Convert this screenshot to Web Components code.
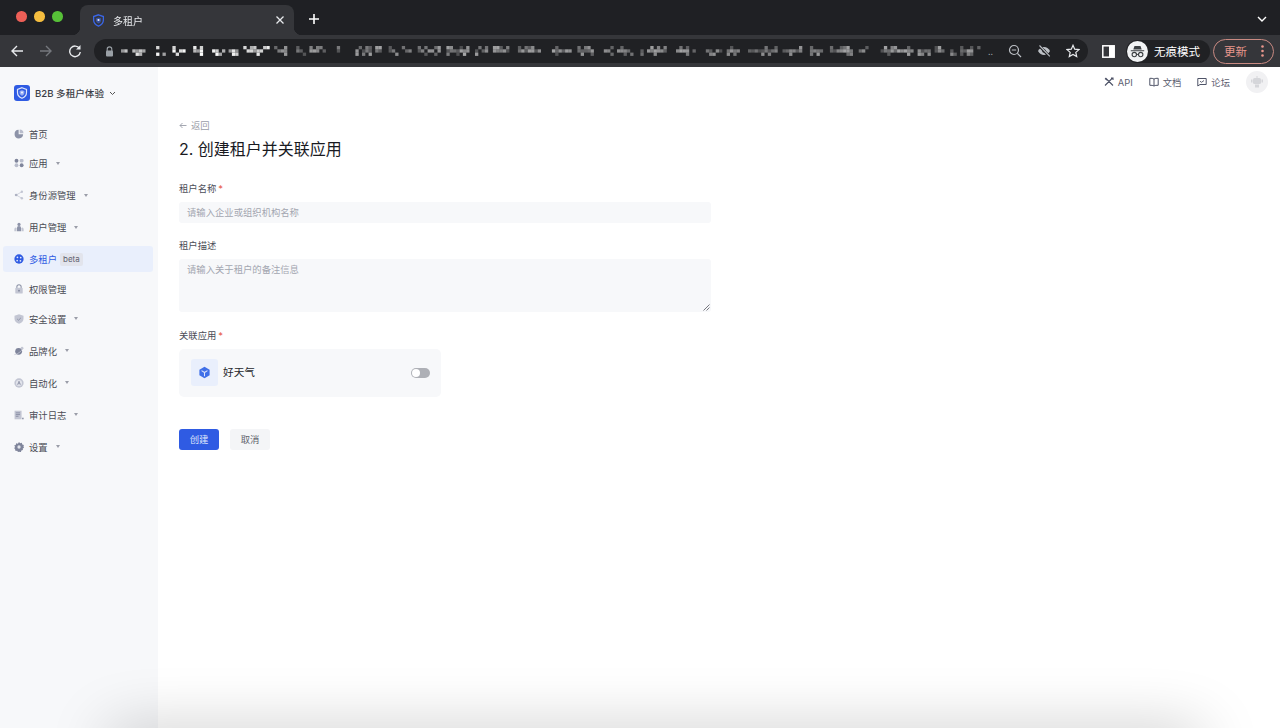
<!DOCTYPE html>
<html lang="zh">
<head>
<meta charset="utf-8">
<title>多租户</title>
<style>
  html, body { margin: 0; height: 100%; overflow: hidden; background: #fff; }
  body { font-family: Inter, "Noto Sans CJK SC", sans-serif; position: relative; }
  .app { display: flex; flex-direction: column; height: 728px; filter: blur(.3px); }
  .body-row { display: flex; flex: 1; min-height: 0; }
  /* soft shadow of the window below the bottom edge */
  .edge-clip { position: absolute; left: 0; right: 0; bottom: 0; height: 60px; overflow: hidden; pointer-events: none; }
  .edge-shadow { position: absolute; left: 105px; right: 75px; top: 60px; height: 40px; border-radius: 20px; box-shadow: 0 0 60px rgba(0,0,0,.22); }
</style>
</head>
<body>
<div class="app">
  <browser-tabs></browser-tabs>
  <browser-toolbar></browser-toolbar>
  <div class="body-row">
    <side-nav>
      <nav-item icon="pie" gap="3">首页</nav-item>
      <nav-item icon="apps" gap="3" arrow>应用</nav-item>
      <nav-item icon="share" gap="6" arrow>身份源管理</nav-item>
      <nav-item icon="users" gap="6" arrow>用户管理</nav-item>
      <nav-item icon="tenant" gap="6" active badge="beta">多租户</nav-item>
      <nav-item icon="lock" gap="4">权限管理</nav-item>
      <nav-item icon="shield" gap="3.500" arrow>安全设置</nav-item>
      <nav-item icon="planet" gap="6" arrow>品牌化</nav-item>
      <nav-item icon="auto" gap="6" arrow>自动化</nav-item>
      <nav-item icon="log" gap="6" arrow>审计日志</nav-item>
      <nav-item icon="gear" gap="6" arrow>设置</nav-item>
    </side-nav>
    <main-pane>
      <tenant-form></tenant-form>
    </main-pane>
  </div>
</div>
<div class="edge-clip"><div class="edge-shadow"></div></div>

<script>
const ICONS = {
  pie: '<path d="M6.500 1.200A6 6 0 1 0 12.800 7.500H6.500z" fill="#8d93a8"/><path d="M8 .8a5.300 5.300 0 0 1 5.200 5.200H8z" fill="#b9bdcc"/>',
  apps: '<circle cx="3.500" cy="3.800" r="2.700" fill="#7f859b"/><rect x="8" y="1.300" width="5.400" height="5" rx="2" fill="#b9bdcc"/><circle cx="3.500" cy="10.200" r="2.700" fill="#b9bdcc"/><circle cx="10.700" cy="10.200" r="2.700" fill="#7f859b"/>',
  share: '<path d="M11 2.500 3 7l8 4.500" fill="none" stroke="#c3c6d3" stroke-width="1"/><circle cx="3" cy="7" r="1.900" fill="#aeb2c2"/><circle cx="11" cy="2.500" r="1.700" fill="#c3c6d3"/><circle cx="11" cy="11.500" r="1.700" fill="#c3c6d3"/>',
  users: '<circle cx="7" cy="3.400" r="2.200" fill="#8d93a8"/><path d="M4 13V8.600a3 3 0 0 1 6 0V13z" fill="#8d93a8"/><path d="M.5 13V10a2.200 2.200 0 0 1 2.800-2V13zM13.500 13V10a2.200 2.200 0 0 0-2.800-2V13z" fill="#c3c6d3"/>',
  tenant: '<circle cx="7" cy="7" r="6.500" fill="#2f5be3"/><circle cx="4.800" cy="4.600" r="1.200" fill="#e6ecfb"/><circle cx="9.400" cy="5" r="1.200" fill="#e6ecfb"/><circle cx="4.400" cy="9.200" r="1.200" fill="#e6ecfb"/><circle cx="9" cy="9.600" r="1.200" fill="#e6ecfb"/>',
  lock: '<path d="M4 6V4a3 3 0 0 1 6 0V6" fill="none" stroke="#8d93a8" stroke-width="1.500"/><rect x="1.800" y="5.400" width="10.400" height="8" rx="1.200" fill="#c3c6d3"/><circle cx="7" cy="9.400" r="1.200" fill="#7f859b"/>',
  shield: '<path d="M7 .5 13.300 2.300V7c0 3.300-2.800 5.400-6.300 6.500C3.500 12.400.7 10.300.7 7V2.300z" fill="#c3c6d3"/><path d="M4.500 7 6.300 8.700 9.600 5.500" fill="none" stroke="#7f859b" stroke-width="1.100"/>',
  planet: '<circle cx="6.500" cy="7.500" r="4.800" fill="#7f859b"/><path d="M.5 12C3.500 12.200 11 7.500 13 2.800" fill="none" stroke="#c3c6d3" stroke-width="1.100"/><circle cx="11.300" cy="2.800" r="1.800" fill="#c3c6d3"/>',
  auto: '<circle cx="7" cy="7" r="6.500" fill="#c3c6d3"/><circle cx="7" cy="7" r="4.200" fill="#e3e5ec"/><path d="M5 9.500 7 4.500l2 5M5.800 8h2.400" fill="none" stroke="#7f859b" stroke-width="1"/>',
  log: '<rect x=".8" y="1" width="9.800" height="12" fill="#c3c6d3"/><path d="M2.500 4h6M2.500 6.400h6M2.500 8.800h3.800" stroke="#7f859b" stroke-width="1.100"/><rect x="11.300" y="10.800" width="2.200" height="2.200" fill="#8d93a8"/>',
  gear: '<path d="M7 0 8.600 1.700 10.900 1.200l.7 2.200 2.200.7-.5 2.300L14 7.900l-1.700 1.200.2 2.200-2.200.7-.7 2.200-2.300-.5L5.600 14 4.400 12.300l-2.200.2-.7-2.200-1.300-2L1.700 7 .2 4.800l2.200-.7.7-2.200 2.300.5z" fill="#7f859b"/><circle cx="7" cy="7" r="2.300" fill="#e3e5ec"/>',
  shieldLogo: '<path d="M12 1.500 21 4.700V11c0 5.500-3.800 9.400-9 11.500C6.800 20.400 3 16.500 3 11V4.700z" fill="none" stroke="currentColor" stroke-width="2.400"/><path d="M12 6.300 16.800 8V11.500c0 2.900-2 5-4.800 6.200-2.800-1.200-4.800-3.300-4.800-6.200V8z" fill="currentColor" opacity=".6"/><circle cx="12" cy="11" r="2" fill="#fff" opacity=".9"/>'
};

class BrowserTabs extends HTMLElement {
  constructor() {
    super();
    this.attachShadow({ mode: 'open' });
    this.shadowRoot.innerHTML = `
      <style>
        :host { display: flex; align-items: flex-end; height: 35px; background: #1f2024; padding-left: 16px; position: relative; font-family: "Noto Sans CJK SC", sans-serif; }
        .lights { display: flex; gap: 7.500px; align-self: flex-start; margin-top: 11px; width: 64px; }
        .lights i { width: 10.500px; height: 10.500px; border-radius: 50%; }
        .tab { width: 214px; height: 30px; background: #35363a; border-radius: 8px 8px 0 0; display: flex; align-items: center; padding: 0 9px 0 12px; box-sizing: border-box; color: #e8eaed; font-size: 10px; position: relative; }
        .tab::before, .tab::after { content: ''; position: absolute; bottom: 0; width: 8px; height: 8px; }
        .tab::before { left: -8px; background: radial-gradient(circle at 0 0, transparent 8px, #35363a 8.500px); }
        .tab::after { right: -8px; background: radial-gradient(circle at 100% 0, transparent 8px, #35363a 8.500px); }
        .fav { width: 13px; height: 13px; color: #3a66e6; margin-right: 8px; }
        .title { flex: 1; }
        .close { width: 10px; height: 10px; }
        .plus { width: 12px; height: 12px; margin: 0 0 10px 14px; }
        .down { position: absolute; right: 13px; top: 16px; width: 10px; height: 6px; }
      </style>
      <div class="lights"><i style="background:#ed5f57"></i><i style="background:#f5bd3f"></i><i style="background:#57c038"></i></div>
      <div class="tab">
        <svg class="fav" viewBox="0 0 24 24">${ICONS.shieldLogo}</svg>
        <span class="title">多租户</span>
        <svg class="close" viewBox="0 0 10 10"><path d="M1.500 1.500l7 7M8.500 1.500l-7 7" stroke="#e8eaed" stroke-width="1.300"/></svg>
      </div>
      <svg class="plus" viewBox="0 0 12 12"><path d="M6 1v10M1 6h10" stroke="#fff" stroke-width="1.600"/></svg>
      <svg class="down" viewBox="0 0 10 6"><path d="M1 1l4 4 4-4" fill="none" stroke="#fff" stroke-width="1.400"/></svg>
    `;
  }
}
customElements.define('browser-tabs', BrowserTabs);

class UrlBlur extends HTMLElement {
  constructor() {
    super();
    this.attachShadow({ mode: 'open' });
    // pixelated address: pseudo random blocks, same result every load
    let seed = 11;
    const rnd = () => (seed = (seed * 16807) % 2147483647) / 2147483647;
    const cell = 3.300;
    let x = 0, rects = '';
    while (x < 858) {
      const wordEnd = x + 6 + rnd() * 24;
      const strong = x < 126;
      for (; x < wordEnd && x < 858; x += cell) {
        for (let r = 0; r < 3; r++) {
          if (rnd() < (r === 1 ? .8 : .35)) {
            const a = (strong ? .5 : .2) + rnd() * (strong ? .5 : .4);
            rects += `<rect x="${x.toFixed(1)}" y="${(r * cell).toFixed(1)}" width="${cell}" height="${cell}" fill="#fff" opacity="${a.toFixed(2)}"/>`;
          }
        }
      }
      x += 3 + rnd() * 6;
    }
    this.shadowRoot.innerHTML = `
      <style>:host { display: block; } svg { display: block; filter: blur(.5px); }</style>
      <svg width="866" height="10" viewBox="0 0 866 10">${rects}</svg>
    `;
  }
}
customElements.define('url-blur', UrlBlur);

class BrowserToolbar extends HTMLElement {
  constructor() {
    super();
    this.attachShadow({ mode: 'open' });
    this.shadowRoot.innerHTML = `
      <style>
        :host { display: flex; align-items: center; height: 32px; background: #35363a; font-family: "Noto Sans CJK SC", sans-serif; flex: none; padding-left: 10px; box-sizing: border-box; }
        svg { display: block; flex: none; }
        .nav { display: flex; gap: 15px; width: 84px; }
        .omni { width: 994px; height: 24px; background: #202124; border-radius: 12px; display: flex; align-items: center; padding-left: 11px; box-sizing: border-box; }
        .omni url-blur { margin-left: 7px; }
        .dots { color: #9aa0a6; font-size: 9px; margin: 0 0 0 1px; width: 15.500px; }
        .tools { display: flex; gap: 15px; margin-left: 4px; }
        .panel { margin-left: 14px; }
        .incog { display: flex; align-items: center; height: 23px; width: 84px; margin-left: 11px; background: #202124; border-radius: 12px; color: #fff; font-size: 11.500px; box-sizing: border-box; }
        .incog .face { width: 21px; height: 21px; border-radius: 50%; background: #f1f3f4; margin: 0 6px 0 1px; display: flex; align-items: center; justify-content: center; }
        .update { display: flex; align-items: center; width: 61px; height: 25px; margin-left: 3px; border: 1px solid #c98a82; border-radius: 13px; box-sizing: border-box; padding: 0 9px 0 10px; color: #e8968c; font-size: 11.500px; justify-content: space-between; }
      </style>
      <div class="nav">
        <svg width="14" height="14" viewBox="0 0 14 14"><path d="M13 7H2M7 2 2 7l5 5" fill="none" stroke="#e8eaed" stroke-width="1.400"/></svg>
        <svg width="14" height="14" viewBox="0 0 14 14"><path d="M1 7h11M7 2l5 5-5 5" fill="none" stroke="#75787d" stroke-width="1.400"/></svg>
        <svg width="14" height="14" viewBox="0 0 14 14"><path d="M11.500 4.500A5.300 5.300 0 1 0 12.300 8" fill="none" stroke="#e8eaed" stroke-width="1.400"/><path d="M12.500 1v4.500H8z" fill="#e8eaed"/></svg>
      </div>
      <div class="omni">
        <svg width="9" height="11" viewBox="0 0 9 11"><path d="M2.200 5V3.200a2.300 2.300 0 0 1 4.600 0V5" fill="none" stroke="#9aa0a6" stroke-width="1.100"/><rect x="1" y="4.500" width="7" height="6" rx="1" fill="#9aa0a6"/></svg>
        <url-blur></url-blur>
        <span class="dots">..</span>
        <div class="tools">
          <svg width="14" height="14" viewBox="0 0 14 14"><circle cx="6" cy="6" r="4.500" fill="none" stroke="#bdc1c6" stroke-width="1.200"/><path d="M9.400 9.400 13 13" stroke="#bdc1c6" stroke-width="1.200"/><path d="M3.800 6h4.400" stroke="#bdc1c6"/></svg>
          <svg width="14" height="14" viewBox="0 0 14 14"><path d="M1 7c1.500-2.800 3.500-4 6-4s4.500 1.200 6 4c-1.500 2.800-3.500 4-6 4S2.500 9.800 1 7z" fill="#bdc1c6"/><circle cx="7" cy="7" r="1.800" fill="#202124"/><path d="M2 1.500 12.500 12.500" stroke="#202124" stroke-width="2.600"/><path d="M2.500 1.500 12.800 12.300" stroke="#bdc1c6" stroke-width="1.100"/></svg>
          <svg width="14" height="14" viewBox="0 0 14 14"><path d="M7 1.300 8.700 5.200 13 5.600 9.800 8.400 10.700 12.600 7 10.400 3.300 12.600 4.200 8.400 1 5.600 5.300 5.200z" fill="none" stroke="#e8eaed" stroke-width="1.200"/></svg>
        </div>
      </div>
      <svg class="panel" width="13" height="13" viewBox="0 0 13 13"><rect x=".8" y=".8" width="11.400" height="11.400" fill="none" stroke="#fff" stroke-width="1.500"/><rect x="7" y="1" width="5" height="11" fill="#fff"/></svg>
      <div class="incog">
        <div class="face"><svg width="15" height="13" viewBox="0 0 15 13"><path d="M4.500 1h6l1.200 3.500h-8.400zM.8 5.200h13.400v1H.8z" fill="#3c4043"/><circle cx="4.300" cy="9.600" r="2.200" fill="none" stroke="#3c4043" stroke-width="1.100"/><circle cx="10.700" cy="9.600" r="2.200" fill="none" stroke="#3c4043" stroke-width="1.100"/><path d="M6.500 9.400h2" stroke="#3c4043"/></svg></div>
        <span>无痕模式</span>
      </div>
      <div class="update">
        <span>更新</span>
        <svg width="3" height="12" viewBox="0 0 3 12"><circle cx="1.500" cy="1.500" r="1.300" fill="#e8968c"/><circle cx="1.500" cy="6" r="1.300" fill="#e8968c"/><circle cx="1.500" cy="10.500" r="1.300" fill="#e8968c"/></svg>
      </div>
    `;
  }
}
customElements.define('browser-toolbar', BrowserToolbar);

class SideNav extends HTMLElement {
  constructor() {
    super();
    this.attachShadow({ mode: 'open' });
    this.shadowRoot.innerHTML = `
      <style>
        :host { display: block; width: 158px; flex: none; background: #f7f8fa; box-sizing: border-box; padding: 17px 5px 0 3px; font-family: Inter, "Noto Sans CJK SC", sans-serif; }
        .brand { display: flex; align-items: center; height: 18px; margin: 0 0 19px 11px; font-size: 9.600px; font-weight: 500; color: #3b3d45; }
        .logo { width: 16px; height: 16px; border-radius: 3px; background: #2f5be3; display: flex; align-items: center; justify-content: center; margin-right: 5px; color: #dfe6fb; }
        .chev { margin-left: 5px; }
      </style>
      <div class="brand">
        <div class="logo"><svg width="12" height="12" viewBox="0 0 24 24">${ICONS.shieldLogo}</svg></div>
        <span>B2B 多租户体验</span>
        <svg class="chev" width="7" height="5" viewBox="0 0 7 5"><path d="M1 1l2.500 2.500L6 1" fill="none" stroke="#555" stroke-width="1"/></svg>
      </div>
      <slot></slot>
    `;
  }
}
customElements.define('side-nav', SideNav);

class NavItem extends HTMLElement {
  constructor() {
    super();
    this.attachShadow({ mode: 'open' });
  }
  connectedCallback() {
    const active = this.hasAttribute('active');
    const arrow = this.hasAttribute('arrow') ? '<i class="arrow"></i>' : '';
    const badge = this.getAttribute('badge') ? `<span class="badge">${this.getAttribute('badge')}</span>` : '';
    this.style.marginTop = (this.getAttribute('gap') || 0) + 'px';
    this.shadowRoot.innerHTML = `
      <style>
        :host { display: flex; align-items: center; height: 26px; padding-left: 10.500px; border-radius: 3px; font-size: 9.330px; color: ${active ? '#2f5be3' : '#4a4c55'}; background: ${active ? '#e9effc' : 'transparent'}; }
        svg { width: 10px; height: 10px; margin-right: 5.500px; flex: none; }
        .arrow { width: 0; height: 0; margin-left: 8px; border: 2.200px solid transparent; border-top: 3px solid #9a9da8; border-bottom: 0; }
        .badge { margin-left: 3px; padding: 0 3px; height: 13px; line-height: 13px; background: #e2e4ec; border-radius: 2px; color: #5f6270; font-size: 8px; }
      </style>
      <svg viewBox="0 0 14 14">${ICONS[this.getAttribute('icon')]}</svg>
      <slot></slot>${badge}${arrow}
    `;
  }
}
customElements.define('nav-item', NavItem);

class MainPane extends HTMLElement {
  constructor() {
    super();
    this.attachShadow({ mode: 'open' });
    this.shadowRoot.innerHTML = `
      <style>
        :host { display: block; flex: 1; min-width: 0; background: #fff; font-family: Inter, "Noto Sans CJK SC", sans-serif; }
        .top { display: flex; align-items: center; justify-content: flex-end; height: 30px; padding-right: 12px; color: #5d6070; font-size: 9.330px; }
        .link { display: flex; align-items: center; gap: 4px; margin-right: 16px; }
        .link svg { width: 10px; height: 10px; }
        .avatar { width: 22px; height: 22px; border-radius: 50%; background: #f1f1f3; display: flex; align-items: center; justify-content: center; }
      </style>
      <div class="top">
        <div class="link"><svg viewBox="0 0 10 10"><path d="M1.500 1 9 8.500M8.500 1 1 8.500M7 1h2v2M1 1.500 3 3" fill="none" stroke="#4e5367" stroke-width="1.100"/></svg>API</div>
        <div class="link"><svg viewBox="0 0 10 10"><path d="M5 2C4 1.300 2.500 1.200 .8 1.300v7C2.500 8.200 4 8.300 5 9c1-.7 2.500-.8 4.200-.7v-7C7.500 1.200 6 1.300 5 2zM5 2v7" fill="none" stroke="#4e5367" stroke-width="1"/></svg>文档</div>
        <div class="link"><svg viewBox="0 0 10 10"><path d="M.8 1.500h8.400v6H3L.8 9z" fill="none" stroke="#4e5367" stroke-width="1"/><path d="M3 4.200 4.500 5.300 7 3.500" fill="none" stroke="#4e5367" stroke-width=".9"/></svg>论坛</div>
        <div class="avatar"><svg width="14" height="14" viewBox="0 0 14 14" fill="#d5d6da"><rect x="3" y="3" width="8" height="6" rx="1.500"/><rect x="6.500" y="1" width="1" height="2"/><rect x="1" y="4.500" width="1.500" height="3"/><rect x="11.500" y="4.500" width="1.500" height="3"/><rect x="5" y="9.500" width="4" height="3"/></svg></div>
      </div>
      <slot></slot>
    `;
  }
}
customElements.define('main-pane', MainPane);

class FormField extends HTMLElement {
  constructor() {
    super();
    this.attachShadow({ mode: 'open' });
  }
  connectedCallback() {
    const star = this.hasAttribute('required') ? '<span class="star">*</span>' : '';
    this.shadowRoot.innerHTML = `
      <style>
        :host { display: block; }
        .label { height: 14px; line-height: 14px; font-size: 9.330px; color: #4b4d57; margin-bottom: 6px; }
        .star { color: #e8604f; margin-left: 2px; }
      </style>
      <div class="label">${this.getAttribute('label')}${star}</div>
      <slot></slot>
    `;
  }
}
customElements.define('form-field', FormField);

class TextBox extends HTMLElement {
  constructor() {
    super();
    this.attachShadow({ mode: 'open' });
  }
  connectedCallback() {
    const multi = this.hasAttribute('multiline');
    this.shadowRoot.innerHTML = `
      <style>
        :host { display: block; position: relative; height: ${multi ? 53 : 21}px; box-sizing: border-box; padding: ${multi ? '4px' : '0'} 8px 0; line-height: ${multi ? '13px' : '21px'}; background: #f7f8fa; border-radius: 3px; font-size: 9.330px; color: #a3a6b0; }
        svg { position: absolute; right: 1px; bottom: 1px; }
      </style>
      <slot></slot>
      ${multi ? '<svg width="7" height="7" viewBox="0 0 7 7"><path d="M.5 6.500l6-6M3.500 6.500l3-3" stroke="#55575f" stroke-width=".8"/></svg>' : ''}
    `;
  }
}
customElements.define('text-box', TextBox);

class AppCard extends HTMLElement {
  constructor() {
    super();
    this.attachShadow({ mode: 'open' });
    this.shadowRoot.innerHTML = `
      <style>
        :host { display: flex; align-items: center; width: 262px; height: 48px; box-sizing: border-box; padding: 0 11px 1px 12px; background: #f7f8fa; border-radius: 5px; }
        .tile { width: 27px; height: 27px; background: #e9effc; border-radius: 3px; display: flex; align-items: center; justify-content: center; margin-right: 5px; margin-bottom: 1px; }
        .name { flex: 1; font-size: 10.670px; color: #26272c; margin-bottom: 3px; }
        .toggle { width: 19px; height: 10px; border-radius: 5px; background: #aeb0b6; position: relative; }
        .toggle::after { content: ''; position: absolute; left: 1px; top: 1px; width: 8px; height: 8px; border-radius: 50%; background: #fff; }
      </style>
      <div class="tile"><svg width="13" height="13" viewBox="0 0 14 14"><path d="M7 .8 12.500 4v6L7 13.200 1.500 10V4z" fill="#3f6fe8"/><path d="M7 7V11M7 7 3.800 5M7 7l3.200-2" stroke="#dfe6fb" stroke-width="1.100" fill="none"/></svg></div>
      <span class="name"><slot></slot></span>
      <div class="toggle"></div>
    `;
  }
}
customElements.define('app-card', AppCard);

class PlainButton extends HTMLElement {
  constructor() {
    super();
    this.attachShadow({ mode: 'open' });
  }
  connectedCallback() {
    const primary = this.hasAttribute('primary');
    this.shadowRoot.innerHTML = `
      <style>
        :host { display: flex; align-items: center; justify-content: center; width: 40px; height: 21px; box-sizing: border-box; padding-bottom: 2px; border-radius: 3px; font-size: 9.330px; background: ${primary ? '#2f5be3' : '#f4f5f7'}; color: ${primary ? '#dfe6fb' : '#62646e'}; }
      </style>
      <slot></slot>
    `;
  }
}
customElements.define('plain-button', PlainButton);

class TenantForm extends HTMLElement {
  constructor() {
    super();
    this.attachShadow({ mode: 'open' });
    this.shadowRoot.innerHTML = `
      <style>
        :host { display: block; width: 532px; margin: 21px 0 0 21px; }
        .back { display: flex; align-items: center; gap: 4px; height: 14px; font-size: 9.330px; color: #9a9da8; }
        h1 { margin: 5px 0 21px; font-size: 16px; line-height: 24px; font-weight: 400; color: #191a1f; }
        form-field { margin-bottom: 15px; }
        form-field:nth-of-type(1) { margin-bottom: 16px; }
        form-field:nth-of-type(2) { margin-bottom: 17px; }
        .actions { display: flex; gap: 11px; margin-top: 32px; }
      </style>
      <div class="back"><svg width="8" height="7" viewBox="0 0 8 7"><path d="M7.500 3.500H1M3.500 1 1 3.500 3.500 6" fill="none" stroke="#9a9da8" stroke-width=".9"/></svg>返回</div>
      <h1>2. 创建租户并关联应用</h1>
      <form-field label="租户名称" required><text-box>请输入企业或组织机构名称</text-box></form-field>
      <form-field label="租户描述"><text-box multiline>请输入关于租户的备注信息</text-box></form-field>
      <form-field label="关联应用" required><app-card>好天气</app-card></form-field>
      <div class="actions">
        <plain-button primary>创建</plain-button>
        <plain-button>取消</plain-button>
      </div>
    `;
  }
}
customElements.define('tenant-form', TenantForm);
</script>
</body>
</html>
